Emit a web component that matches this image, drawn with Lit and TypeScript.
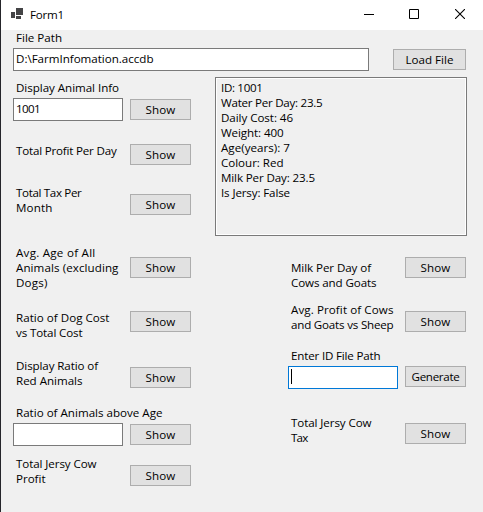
import { LitElement, html, css, nothing } from "lit";
import { customElement, property } from "lit/decorators.js";

type Line = [text: string, width: number];

interface Row {
  name: string;
  lines: Line[];
  button: Line;
  box?: "empty" | "filled" | "focused";
  value?: Line;
}

const show: Line = ["Show", 30];

const upperRows: Row[] = [
  { name: "animal", lines: [["Display Animal Info", 103]], button: show, box: "filled", value: ["1001", 24] },
  { name: "profit", lines: [["Total Profit Per Day", 100.5]], button: show },
  { name: "tax", lines: [["Total Tax Per", 65.5], ["Month", 36.5]], button: show },
];

const leftRows: Row[] = [
  { name: "age", lines: [["Avg. Age of All", 79.5], ["Animals (excluding", 102.5], ["Dogs)", 31.5]], button: show },
  { name: "dog", lines: [["Ratio of Dog Cost", 93.5], ["vs Total Cost", 66.5]], button: show },
  { name: "red", lines: [["Display Ratio of", 82], ["Red Animals", 66.5]], button: show },
  { name: "above", lines: [["Ratio of Animals above Age", 146.5]], button: show, box: "empty" },
  { name: "jersy", lines: [["Total Jersy Cow", 80.5], ["Profit", 29.5]], button: show },
];

const rightRows: Row[] = [
  { name: "milk", lines: [["Milk Per Day of", 80], ["Cows and Goats", 85.5]], button: show },
  { name: "sheep", lines: [["Avg. Profit of Cows", 102.5], ["and Goats vs Sheep", 102.5]], button: show },
  { name: "idfile", lines: [["Enter ID File Path", 89.5]], button: ["Generate", 48], box: "focused" },
  { name: "cowtax", lines: [["Total Jersy Cow", 80.5], ["Tax", 16.5]], button: show },
];

const info: Line[] = [
  ["ID: 1001", 41.5],
  ["Water Per Day: 23.5", 101.5],
  ["Daily Cost: 46", 72],
  ["Weight: 400", 62.5],
  ["Age(years): 7", 69],
  ["Colour: Red", 62.5],
  ["Milk Per Day: 23.5", 94],
  ["Is Jersy: False", 69],
];

// A single line of text whose tracking is adjusted to reach a given width.
@customElement("text-line")
export class TextLine extends LitElement {
  @property() text = "";
  @property({ type: Number }) width = 0;

  static styles = css`
    :host {
      display: block;
      height: 15px;
      line-height: 15px;
      white-space: pre;
    }
    .run {
      display: inline-block;
      height: 15px;
      vertical-align: top;
    }
  `;

  updated() {
    const run = this.renderRoot.querySelector<HTMLElement>(".run");
    if (!run || !this.width) return;
    run.style.letterSpacing = "0px";
    const natural = run.getBoundingClientRect().width;
    run.style.letterSpacing = `${(this.width - natural) / this.text.length}px`;
  }

  render() {
    return html`<span class="run">${this.text}</span>`;
  }
}

const line = ([text, width]: Line) => html`<text-line .text=${text} .width=${width}></text-line>`;

@customElement("app-root")
export class AppRoot extends LitElement {
  static styles = css`
    :host {
      display: block;
      box-sizing: border-box;
      width: 483px;
      height: 512px;
      overflow: hidden;
      border-left: 1px solid #25252a;
      background: #f0f0f0;
      color: #000;
      font: 11.6px/15px "Open Sans", "Noto Sans", sans-serif;
    }
    * { box-sizing: border-box; }
    .titlebar {
      display: flex;
      align-items: flex-start;
      height: 30px;
      padding: 7px 18px 0 10px;
      background: #fff;
    }
    .logo { width: 12px; height: 11px; margin: 1px 7px 0 0; flex: none; }
    .controls { display: flex; gap: 35px; margin: 2px 0 0 auto; }
    .controls svg { width: 10px; height: 10px; display: block; }
    .controls .close { margin-left: 1px; }
    .file { display: flex; height: 47px; padding-left: 12px; }
    .file .path { width: 356px; }
    .file .button { width: 73px; margin: 19px 0 0 24px; }
    .caption { padding-left: 3px; }
    .box {
      height: 23px;
      margin-top: 3px;
      padding: 2px 0 0 2px;
      border: 1px solid #7a7a7a;
      background: #fff;
    }
    .animal .box, .above .box, .idfile .box { width: 110px; }
    .box.focused { border-color: #0078d7; }
    .caret { width: 1px; height: 15px; background: #000; }
    .button {
      display: flex;
      justify-content: center;
      width: 61px;
      height: 21px;
      padding: 2px 0 0;
      margin: 0;
      border: 1px solid #adadad;
      border-radius: 0;
      background: #e1e1e1;
      color: #000;
      font: inherit;
      flex: none;
    }
    .upper { display: flex; height: 164px; padding-left: 12px; }
    .lower { display: flex; padding-left: 12px; gap: 97px; }
    .info {
      width: 252px;
      height: 159px;
      margin-left: 24px;
      padding: 2px 0 0 5px;
      border: 1px solid #7a7a7a;
      box-shadow: inset 0 0 0 1px #fff;
    }
    .row { display: flex; align-items: flex-start; }
    .label { width: 117px; flex: none; white-space: nowrap; }
    .animal { height: 60px; }
    .animal .label { padding-top: 3px; }
    .animal .button { margin-top: 22px; }
    .profit { height: 43px; }
    .profit .label { padding-top: 6px; }
    .profit .button { margin-top: 7px; }
    .tax { height: 61px; }
    .tax .label { padding-top: 5px; }
    .tax .button { margin-top: 14px; }
    .age { height: 60px; }
    .age .label { padding-top: 4px; }
    .age .button { margin-top: 16px; }
    .dog { height: 51px; }
    .dog .label { padding-top: 9px; }
    .dog .button { margin-top: 10px; }
    .red { height: 50px; }
    .red .label { padding-top: 6px; }
    .red .button { margin-top: 15px; }
    .above { height: 48px; }
    .above .label { padding-top: 3px; }
    .above .button { margin-top: 22px; }
    .jersy .label { padding-top: 6px; }
    .jersy .button { margin-top: 15px; }
    .milk { height: 59px; }
    .milk .label { padding-top: 19px; }
    .milk .button { margin-top: 16px; }
    .sheep { height: 45px; }
    .sheep .label { padding-top: 2px; }
    .sheep .button { margin-top: 11px; }
    .idfile { height: 55px; }
    .idfile .label { padding-top: 3px; }
    .idfile .button { margin-top: 21px; }
    .cowtax .label { padding-top: 15px; }
    .cowtax .button { margin-top: 23px; }
  `;

  private row(r: Row) {
    return html`
      <div class="row ${r.name}">
        <div class="label">
          <div class="caption">${r.lines.map(line)}</div>
          ${r.box
            ? html`<div class="box ${r.box}">
                ${r.value ? line(r.value) : nothing}
                ${r.box === "focused" ? html`<div class="caret"></div>` : nothing}
              </div>`
            : nothing}
        </div>
        <button class="button">${line(r.button)}</button>
      </div>
    `;
  }

  render() {
    return html`
      <div class="titlebar">
        <svg class="logo" viewBox="0 0 12 11" shape-rendering="crispEdges" fill="#444446">
          <path d="M5 0h7v7H5zM0 4h4v6H0zM5 8h5v3H5z" />
        </svg>
        ${line(["Form1", 34])}
        <div class="controls">
          <svg viewBox="0 0 10 10" shape-rendering="crispEdges"><path d="M0 5h10v1H0z" /></svg>
          <svg viewBox="0 0 10 10" fill="none" stroke="#000"><path d="M.5 .5h9v9h-9z" /></svg>
          <svg class="close" viewBox="0 0 10 10" fill="none" stroke="#000" stroke-width="1.1"><path d="M0 0l10 10M10 0L0 10" /></svg>
        </div>
      </div>
      <div class="file">
        <div class="path">
          <div class="caption">${line(["File Path", 46])}</div>
          <div class="box">${line(["D:\\FarmInfomation.accdb", 137.5])}</div>
        </div>
        <button class="button">${line(["Load File", 48])}</button>
      </div>
      <div class="upper">
        <div>${upperRows.map((r) => this.row(r))}</div>
        <div class="info">${info.map(line)}</div>
      </div>
      <div class="lower">
        <div>${leftRows.map((r) => this.row(r))}</div>
        <div>${rightRows.map((r) => this.row(r))}</div>
      </div>
    `;
  }
}
